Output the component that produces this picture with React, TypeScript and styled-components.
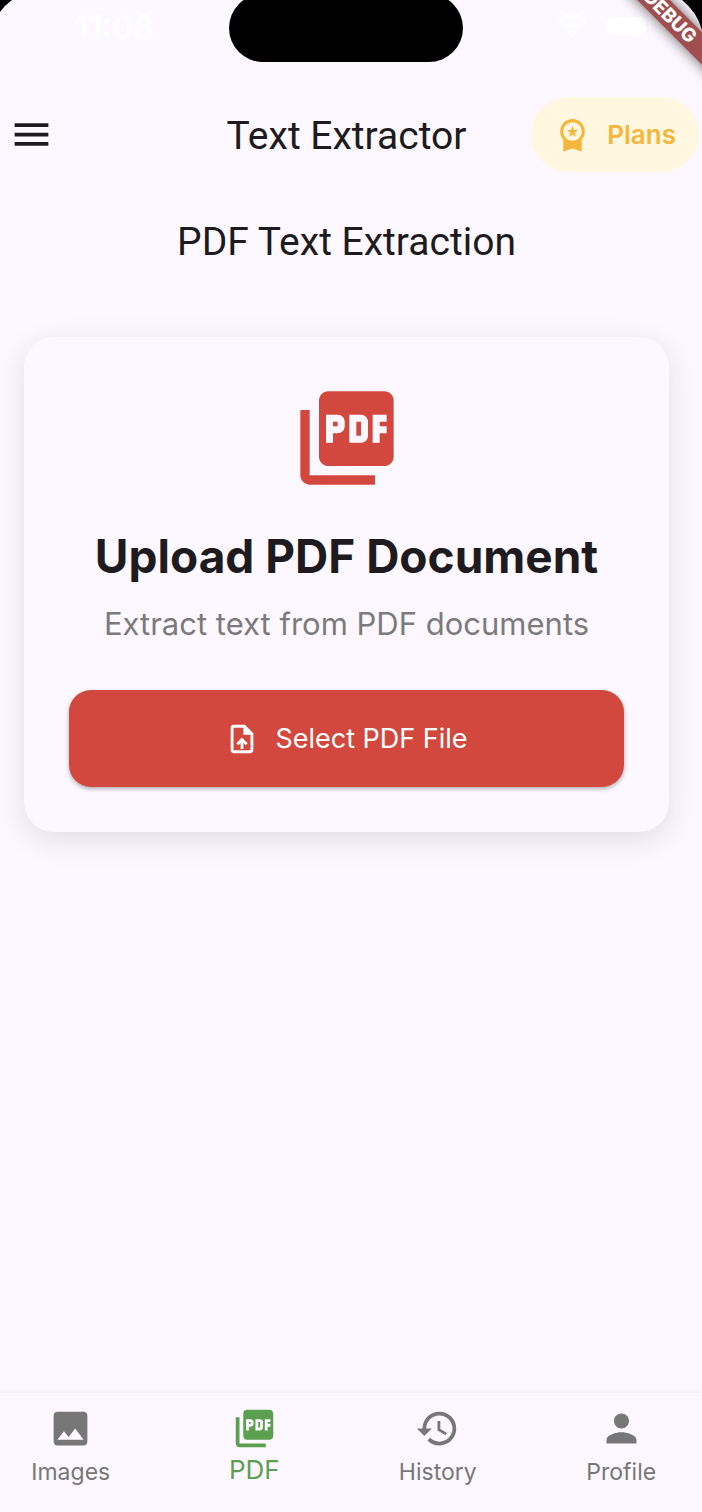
import React from "react";
import styled, { createGlobalStyle } from "styled-components";
import {
  MdMenu,
  MdPictureAsPdf,
  MdOutlineUploadFile,
  MdImage,
  MdHistory,
  MdPerson,
  MdWorkspacePremium,
} from "react-icons/md";

const GlobalStyle = createGlobalStyle`
  *, *::before, *::after { box-sizing: border-box; }
  body {
    margin: 0;
    background: #fdf8ff;
    color: #1d1b20;
    font-family: Inter, "Liberation Sans", sans-serif;
  }
  h1, h2, p { margin: 0; }
  button { font: inherit; border: 0; cursor: pointer; }
`;

const Screen = styled.div`
  position: relative;
  display: flex;
  flex-direction: column;
  min-height: 100vh;
  overflow: hidden;
`;

const StatusBar = styled.header`
  display: grid;
  grid-template-columns: 1fr 234px 1fr;
  height: 62px;
  margin-right: 10px;
  color: #fff;
`;

const Clock = styled.time`
  justify-self: center;
  padding-top: 8px;
  font-size: 32px;
  line-height: 40px;
  font-weight: 600;
`;

const Island = styled.div`
  height: 68px;
  margin-top: -6px;
  border-radius: 34px;
  background: #000;
`;

const StatusIcons = styled.div`
  display: flex;
  align-items: center;
  gap: 16px;
  padding: 0 0 10px 93px;
`;

const Corner = styled.svg<{ $side: "left" | "right" }>`
  position: absolute;
  top: 0;
  ${(p) => p.$side}: 0;
`;

const DebugBanner = styled.div`
  position: absolute;
  top: 5px;
  right: -43px;
  width: 150px;
  height: 23px;
  transform: rotate(45deg);
  background: #a14e50;
  box-shadow: 0 0 14px rgba(0, 0, 0, 0.6);
  color: #fff;
  font-size: 19px;
  line-height: 23px;
  font-weight: 800;
  text-align: center;
`;

const AppBar = styled.div`
  display: grid;
  grid-template-columns: 1fr auto 1fr;
  align-items: center;
  height: 75px;
  margin-top: 35px;
  padding-right: 9px;
`;

const MenuButton = styled.button`
  display: flex;
  justify-self: start;
  padding: 0 9px;
  background: none;
  color: inherit;
`;

const Title = styled.h1`
  padding-top: 2px;
  font-family: Roboto, "Liberation Sans", sans-serif;
  font-size: 39px;
  line-height: 52px;
  font-weight: 400;
`;

const PlansButton = styled.button`
  display: flex;
  align-items: center;
  justify-self: end;
  gap: 16px;
  height: 75px;
  margin-right: -6px;
  padding: 0 23px;
  border-radius: 38px;
  background: #fff7e0;
  color: #f5b63c;
  font-size: 26px;
  font-weight: 600;
`;

const Main = styled.main`
  flex: 1;
  padding: 42px 33px 0 24px;
`;

const PageTitle = styled(Title).attrs({ as: "h2" })`
  text-align: center;
`;

const UploadCard = styled.section`
  display: flex;
  flex-direction: column;
  align-items: center;
  margin-top: 69px;
  padding: 45px;
  border-radius: 30px;
  background: #fdf8ff;
  box-shadow: 0 8px 30px rgba(29, 27, 32, 0.12);
  text-align: center;
`;

const CardTitle = styled.h2`
  margin-top: 34px;
  font-size: 46px;
  line-height: 56px;
  font-weight: 700;
`;

const CardText = styled.p`
  margin-top: 20px;
  color: #7b7b7b;
  font-size: 31px;
  line-height: 40px;
`;

const SelectButton = styled.button`
  display: flex;
  align-items: center;
  justify-content: center;
  gap: 16px;
  width: 100%;
  height: 97px;
  margin-top: 46px;
  border-radius: 22px;
  background: #d2483e;
  color: #fff;
  box-shadow: 0 2px 4px rgba(0, 0, 0, 0.3);
  font-size: 27px;
  font-weight: 400;
`;

const NavBar = styled.nav`
  display: grid;
  grid-template-columns: repeat(4, 1fr);
  height: 119px;
  margin: 0 -11px 0 -21px;
  box-shadow: 0 -1px 4px rgba(29, 27, 32, 0.05);
`;

const NavItem = styled.button<{ $active?: boolean }>`
  display: flex;
  flex-direction: column;
  align-items: center;
  gap: ${(p) => (p.$active ? 3 : 5)}px;
  padding: 13px 0 0;
  background: none;
  color: ${(p) => (p.$active ? "#5c9f51" : "#777")};
  font-size: ${(p) => (p.$active ? 26 : 23)}px;
  line-height: 32px;
`;

const tabs = [
  { label: "Images", Icon: MdImage },
  { label: "PDF", Icon: MdPictureAsPdf },
  { label: "History", Icon: MdHistory },
  { label: "Profile", Icon: MdPerson },
];

export default function App() {
  return (
    <Screen>
      <GlobalStyle />
      <StatusBar>
        <Clock>11:08</Clock>
        <Island />
        <StatusIcons>
          <svg width="32" height="24" viewBox="0 0 32 24" fill="none" stroke="#fff" strokeWidth="4">
            <path d="M2 8a20 20 0 0 1 28 0M7 14a13 13 0 0 1 18 0" />
            <path d="M11 18a7 7 0 0 1 10 0l-5 5z" fill="#fff" stroke="none" />
          </svg>
          <svg width="48" height="24" viewBox="0 0 48 24" fill="#fff">
            <rect x="2" y="3" width="40" height="18" rx="6" />
            <path d="M45 8q3 4 0 8z" />
          </svg>
        </StatusIcons>
      </StatusBar>

      <AppBar>
        <MenuButton aria-label="Menu">
          <MdMenu size={45} />
        </MenuButton>
        <Title>Text Extractor</Title>
        <PlansButton>
          <MdWorkspacePremium size={37} />
          Plans
        </PlansButton>
      </AppBar>

      <Main>
        <PageTitle>PDF Text Extraction</PageTitle>
        <UploadCard>
          <MdPictureAsPdf size={112} color="#d2483e" />
          <CardTitle>Upload PDF Document</CardTitle>
          <CardText>Extract text from PDF documents</CardText>
          <SelectButton>
            <MdOutlineUploadFile size={34} />
            Select PDF File
          </SelectButton>
        </UploadCard>
      </Main>

      <NavBar>
        {tabs.map(({ label, Icon }) => (
          <NavItem key={label} $active={label === "PDF"}>
            <Icon size={45} />
            {label}
          </NavItem>
        ))}
      </NavBar>

      <Corner $side="left" width="12" height="12" viewBox="0 0 12 12">
        <path d="M0 0H12Q5 5 0 12z" />
      </Corner>
      <DebugBanner>DEBUG</DebugBanner>
      <Corner $side="right" width="20" height="30" viewBox="0 0 20 30">
        <path d="M0 0H20V30Q15 12 0 0z" />
      </Corner>
    </Screen>
  );
}
